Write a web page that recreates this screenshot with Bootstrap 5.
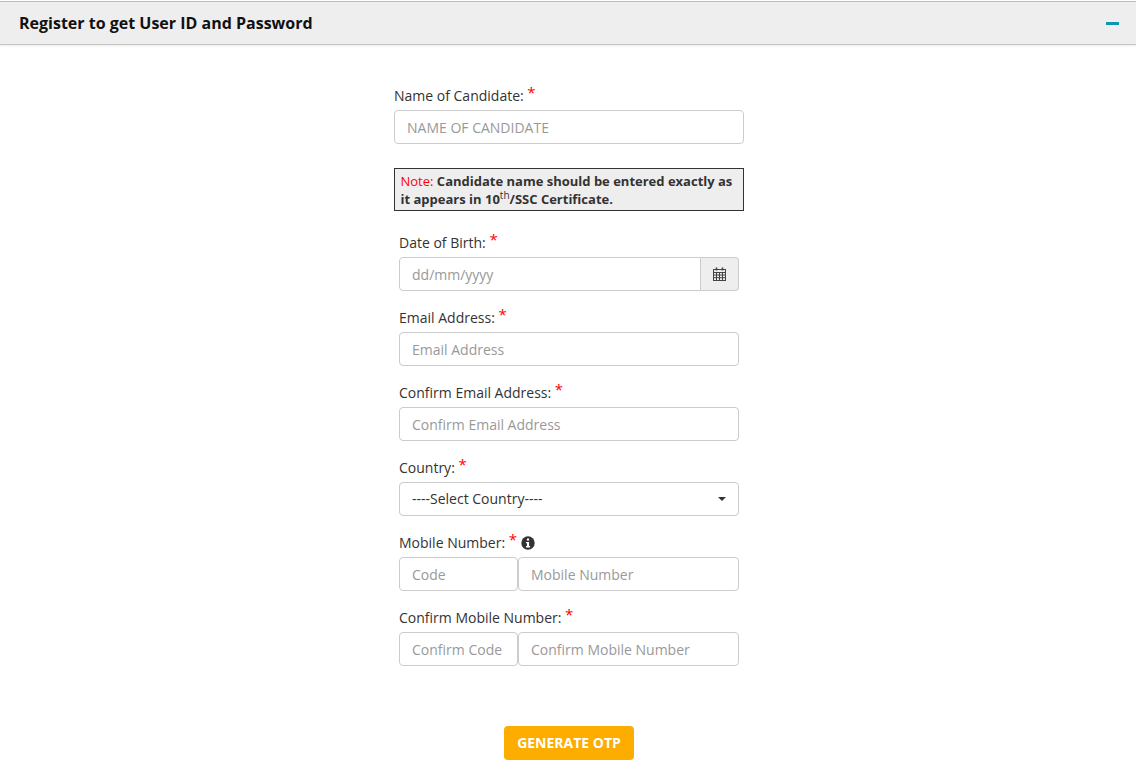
<!DOCTYPE html>
<html lang="en">
<head>
<meta charset="utf-8">
<title>Register</title>
<link rel="stylesheet" href="https://cdn.jsdelivr.net/npm/bootstrap@5.3.0/dist/css/bootstrap.min.css">
<style>
html,body{background:#fff;overflow:hidden}
body{font-family:"Open Sans","Liberation Sans",sans-serif;font-size:14px;color:#333;height:770px}
.reg-head{margin-top:1px;height:44px;background:#eee;border-top:1px solid #bbb;border-bottom:1px solid #c4c4c4;box-shadow:0 1px 2px rgba(0,0,0,.08);padding:0 19px}
.reg-title{font-size:16px;font-weight:700;color:#111;margin:0;line-height:22px}
.reg-dash{width:13px;height:3px;background:#0b97b0;margin-right:-2px}
.reg-wrap{width:350px;margin:41px 0 0 394px}
.reg-label{display:block;font-size:14px;line-height:20px;color:#333;margin:0 0 4px;height:20px}
.reg-star{color:#f00;font-size:15px;line-height:0;vertical-align:3px}
.reg-input.form-control,.reg-input.form-select{height:34px;min-height:34px;font-size:14px;line-height:20px;padding:6px 12px;border:1px solid #ccc;border-radius:4px;color:#333;box-shadow:none}
.reg-input::placeholder{color:#999;opacity:1}
.reg-note{margin-top:24px;height:43px;border:1px solid #333;background:#eee;padding:3px 5.5px 0;font-size:13px;line-height:18px;font-weight:700;color:#333}
.reg-note span{color:#f00;font-weight:400}
.reg-note sup{font-size:10px;font-weight:400;top:-.5em;line-height:0}
.reg-fields{padding:0 5px;margin-top:22px}
.reg-group{height:75px}
.reg-cal{width:38px;background:#eee;border:1px solid #ccc;border-left:0;border-radius:0 4px 4px 0}
.reg-date{border-radius:4px 0 0 4px!important}
.reg-sel.form-select{background-image:none}
.reg-caret{right:13px;top:15px;border-left:4px solid transparent;border-right:4px solid transparent;border-top:4px solid #333}
.reg-code{width:119px;flex:none}
.reg-info{vertical-align:-2px}
.reg-btn.btn{margin-top:43px;width:130px;height:34px;background:#fdad00;border:0;border-radius:4px;color:#fff;font-weight:700;font-size:14px;padding:0;line-height:34px}
</style>
</head>
<body>
<div class="reg-head d-flex align-items-center justify-content-between">
  <h1 class="reg-title">Register to get User ID and Password</h1>
  <div class="reg-dash"></div>
</div>
<form class="reg-wrap">
  <label class="reg-label">Name of Candidate: <span class="reg-star">*</span></label>
  <input class="form-control reg-input" placeholder="NAME OF CANDIDATE">
  <div class="reg-note"><span>Note:</span> Candidate name should be entered exactly as it appears in 10<sup>th</sup>/SSC Certificate.</div>
  <div class="reg-fields">
    <div class="reg-group">
      <label class="reg-label">Date of Birth: <span class="reg-star">*</span></label>
      <div class="d-flex">
        <input class="form-control reg-input reg-date" placeholder="dd/mm/yyyy">
        <div class="reg-cal d-flex align-items-center justify-content-center flex-shrink-0">
          <svg width="13" height="14" viewBox="0 0 13 14" fill="none" stroke="#444" stroke-width="1"><rect x=".5" y="2.5" width="12" height="11"/><path d="M.5 5.5h12M.5 8h12M.5 10.7h12M3.5 5.5v8M6.5 5.5v8M9.5 5.5v8"/><path d="M3.5 .5v3M9.5 .5v3" stroke-width="1.6"/></svg>
        </div>
      </div>
    </div>
    <div class="reg-group">
      <label class="reg-label">Email Address: <span class="reg-star">*</span></label>
      <input class="form-control reg-input" placeholder="Email Address">
    </div>
    <div class="reg-group">
      <label class="reg-label">Confirm Email Address: <span class="reg-star">*</span></label>
      <input class="form-control reg-input" placeholder="Confirm Email Address">
    </div>
    <div class="reg-group">
      <label class="reg-label">Country: <span class="reg-star">*</span></label>
      <div class="position-relative">
        <select class="form-select reg-input reg-sel"><option>----Select Country----</option></select>
        <div class="reg-caret position-absolute"></div>
      </div>
    </div>
    <div class="reg-group">
      <label class="reg-label">Mobile Number: <span class="reg-star">*</span>
        <svg width="14" height="14" viewBox="0 0 14 14" class="reg-info"><circle cx="7" cy="7" r="6.7" fill="#333"/><rect x="5.9" y="2.5" width="2.2" height="2.1" fill="#fff"/><path d="M5 6h3.1v4h1v1.4H5V10h1V7.3H5z" fill="#fff"/></svg>
      </label>
      <div class="d-flex">
        <input class="form-control reg-input reg-code" placeholder="Code">
        <input class="form-control reg-input" placeholder="Mobile Number">
      </div>
    </div>
    <div class="reg-group">
      <label class="reg-label">Confirm Mobile Number: <span class="reg-star">*</span></label>
      <div class="d-flex">
        <input class="form-control reg-input reg-code" placeholder="Confirm Code">
        <input class="form-control reg-input" placeholder="Confirm Mobile Number">
      </div>
    </div>
  </div>
  <div class="text-center"><button type="button" class="btn reg-btn">GENERATE OTP</button></div>
</form>
</body>
</html>
